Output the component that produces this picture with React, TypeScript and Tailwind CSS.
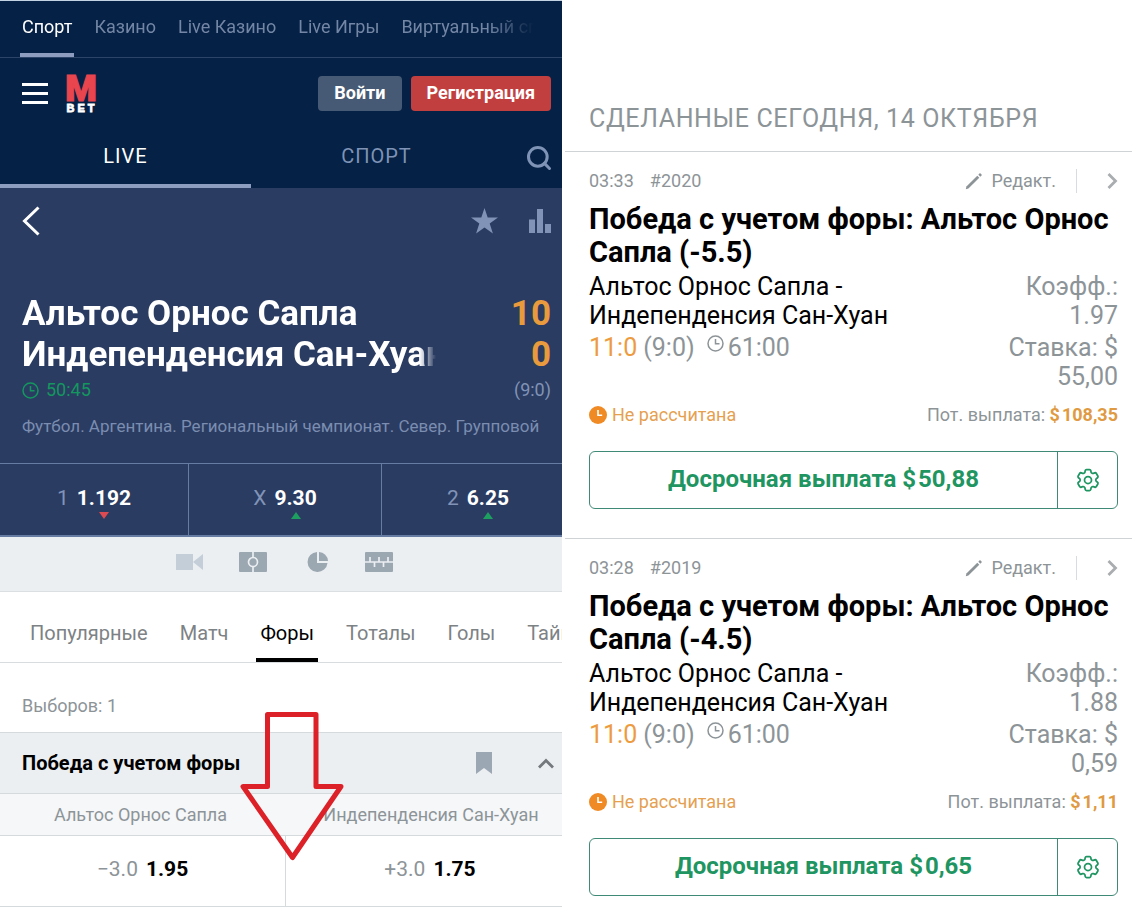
import { Search } from "lucide-react";
import { HiOutlineCog6Tooth } from "react-icons/hi2";
import clsx from "clsx";

const sections = ["Спорт", "Казино", "Live Казино", "Live Игры", "Виртуальный спорт"];

const odds = [
  { label: "1", value: "1.192", up: false },
  { label: "X", value: "9.30", up: true },
  { label: "2", value: "6.25", up: true },
];

const markets = ["Популярные", "Матч", "Форы", "Тоталы", "Голы", "Таймы"];

const bets = [
  {
    time: "03:33",
    id: "#2020",
    handicap: "(-5.5)",
    odd: "1.97",
    stake: "55,00",
    payout: "108,35",
    cashout: "50,88",
  },
  {
    time: "03:28",
    id: "#2019",
    handicap: "(-4.5)",
    odd: "1.88",
    stake: "0,59",
    payout: "1,11",
    cashout: "0,65",
  },
];

const ClockIcon = ({ className }: { className?: string }) => (
  <svg viewBox="0 0 17 17" className={className} fill="none" stroke="currentColor" strokeWidth="1.5">
    <circle cx="8.5" cy="8.5" r="7.5" />
    <path d="M8.5 4v4.8h4" />
  </svg>
);

const SolidClockIcon = () => (
  <svg viewBox="0 0 18 18" className="size-[18px] text-[#f08a24]">
    <circle cx="9" cy="9" r="9" fill="currentColor" />
    <path d="M9 4v5.2h4.2" fill="none" stroke="#fff" strokeWidth="1.6" />
  </svg>
);

const PencilIcon = () => (
  <svg viewBox="0 0 18 18" className="size-[18px]" fill="currentColor">
    <path d="M.8 17.2l.6-2.6L12.300 3.7l2 2L3.4 16.600z" />
    <path d="M13.300 2.7L15 1l2 2-1.700 1.7z" />
  </svg>
);

const TopNav = () => (
  <nav className="h-[57px] border-b border-[#2b4468] pr-7 pl-5">
    <div className="flex h-full gap-[18px] overflow-hidden [mask-image:linear-gradient(to_right,#000_91%,transparent)]">
      {sections.map((name, i) => (
        <a
          key={name}
          href="#"
          className={clsx(
            "shrink-0 border-b-4 px-0.5 pt-[14px] text-lg leading-6 whitespace-nowrap",
            i === 0 ? "border-[#8c9dc0] text-white" : "border-transparent text-[#7486a5]"
          )}
        >
          {name}
        </a>
      ))}
    </div>
  </nav>
);

const Header = () => (
  <header className="border-t border-[#c3d3e4] bg-[#052145]">
    <TopNav />
    <div className="flex items-center pt-[14px] pr-[11px] pl-[22px]">
      <button aria-label="Меню" className="flex flex-col gap-1.5">
        <span className="h-[3px] w-[26px] bg-white" />
        <span className="h-[3px] w-[26px] bg-white" />
        <span className="h-[3px] w-[26px] bg-white" />
      </button>
      <a href="#" className="ml-4">
        <svg viewBox="0 0 34 42" className="h-[42px] w-[34px]">
          <text x="17" y="29" textAnchor="middle" fontFamily="Roboto, sans-serif" fontWeight="900" fontSize="36" stroke="#e8454e" strokeWidth="1.2" fill="#e8454e">
            M
          </text>
          <text x="18" y="40" textAnchor="middle" fontFamily="Liberation Sans, sans-serif" fontWeight="700" fontSize="11" letterSpacing="3" stroke="#fff" strokeWidth=".8" fill="#fff">
            BET
          </text>
        </svg>
      </a>
      <button className="ml-auto h-[35px] rounded bg-[#465a75] px-4 text-lg font-bold text-white">Войти</button>
      <button className="ml-[9px] h-[35px] rounded bg-[#c23f40] px-4 text-lg font-bold text-white">Регистрация</button>
    </div>
    <div className="flex h-[74px] items-stretch text-xl tracking-wider">
      <button className="w-[251px] border-b-4 border-[#8c9dc0] pt-3.5 text-white">LIVE</button>
      <button className="w-[251px] border-b-4 border-transparent pt-3.5 text-[#7e93b5]">СПОРТ</button>
      <button aria-label="Поиск" className="ml-auto pt-3.5 pr-[9px] text-[#7e93b5]">
        <Search className="size-7" strokeWidth={2.6} />
      </button>
    </div>
  </header>
);

const Match = () => (
  <section className="bg-[#2a3c62]">
    <div className="flex items-center pt-[18px] pr-[11px] pl-[22px]">
      <button aria-label="Назад" className="text-white">
        <svg viewBox="0 0 18 30" className="h-[30px] w-[18px]" fill="none" stroke="currentColor" strokeWidth="3">
          <path d="M16.500 1.500L2.500 15l14 13.500" />
        </svg>
      </button>
      <button aria-label="В избранное" className="ml-auto text-[#8193b6]">
        <svg viewBox="0 0 27 26" className="h-[26px] w-[27px]" fill="currentColor">
          <path d="M13.5 0l3.2 9.6H27l-8.3 6 3.2 10-8.4-6.1-8.4 6.1 3.2-10L0 9.6h10.300z" />
        </svg>
      </button>
      <button aria-label="Статистика" className="ml-[31px] text-[#8193b6]">
        <svg viewBox="0 0 22 24" className="h-6 w-[22px]" fill="currentColor">
          <path d="M0 10.500h6V24H0zM8 0h6v24H8zM16 15h6v9h-6z" />
        </svg>
      </button>
    </div>
    <div className="mt-[57px] flex justify-between pr-[11px] pl-[22px] text-[35px] leading-[41px] font-bold">
      <h1 className="w-[414px] overflow-hidden whitespace-nowrap text-white [mask-image:linear-gradient(to_right,#000_96%,transparent)]">
        Альтос Орнос Сапла
        <br />
        Индепенденсия Сан-Хуан
      </h1>
      <div className="text-right text-[#e99a3c]">
        10
        <br />0
      </div>
    </div>
    <div className="mt-[3px] flex items-center justify-between pr-[11px] pl-[22px] text-lg leading-6">
      <span className="flex items-center gap-[7px] text-[#14965f]">
        <ClockIcon className="size-[17px]" />
        50:45
      </span>
      <span className="text-[#8193b6]">(9:0)</span>
    </div>
    <p className="mt-3 overflow-hidden pl-[22px] text-[17px] leading-6 whitespace-nowrap text-[#7b8db0]">
      Футбол. Аргентина. Региональный чемпионат. Север. Групповой
    </p>
    <div className="mt-[25px] grid h-[74px] grid-cols-[189fr_193fr_180fr] divide-x divide-[#667ca3] border-t border-b-2 border-[#667ca3]">
      {odds.map((odd) => (
        <button key={odd.label} className="flex items-center justify-center gap-2 pb-0.5 text-[21px] last:pl-3">
          <span className="text-[#8193b6]">{odd.label}</span>
          <span className="relative font-bold text-white">
            {odd.value}
            <svg
              viewBox="0 0 10 7"
              className={clsx(
                "absolute top-full left-1/2 -mt-0.5 h-[7px] w-[10px] -translate-x-1/2",
                odd.up ? "text-[#1d9f60]" : "rotate-180 text-[#dc4a52]"
              )}
            >
              <path d="M5 0l5 7H0z" fill="currentColor" />
            </svg>
          </span>
        </button>
      ))}
    </div>
  </section>
);

const ViewBar = () => (
  <div className="flex h-[55px] items-center gap-9 border-b border-[#dcdfe2] bg-[#ebeff2] pb-1 pl-[175px] text-[#9ba7b1]">
    <button aria-label="Видео" className="text-[#c3ced9]">
      <svg viewBox="0 0 28 18" className="h-[18px] w-7" fill="currentColor">
        <path d="M1 1h17v16H1zM18 9l10-8v16z" />
      </svg>
    </button>
    <button aria-label="Поле">
      <svg viewBox="0 0 28 20" className="h-5 w-7">
        <rect width="28" height="20" rx="1" fill="currentColor" />
        <g fill="none" stroke="#ebeff2" strokeWidth="1.7">
          <path d="M14 0v5M14 15v5" />
          <circle cx="14" cy="10" r="4.500" />
        </g>
      </svg>
    </button>
    <button aria-label="Статистика матча" className="ml-1">
      <svg viewBox="0 0 22 20" className="h-5 w-[22px]" fill="currentColor">
        <path d="M10 0A10 10 0 1 0 20.500 11H10z" />
        <path d="M12 0a9.500 9.500 0 0 1 9 9h-9z" />
      </svg>
    </button>
    <button aria-label="Хронология">
      <svg viewBox="0 0 28 20" className="h-5 w-7">
        <rect width="28" height="20" rx="1" fill="currentColor" />
        <path d="M0 10h28M5 10V5M14 10V5M23 10V5M9.500 10v5M18.500 10v5" stroke="#ebeff2" strokeWidth="1.7" />
      </svg>
    </button>
  </div>
);

const Markets = () => (
  <section className="relative">
    <nav className="flex h-[71px] gap-6 overflow-hidden border-b border-[#d9dcde] pl-[26px]">
      {markets.map((name) => (
        <a
          key={name}
          href="#"
          className={clsx(
            "shrink-0 border-b-4 px-1 pt-[27px] text-xl leading-7",
            name === "Форы" ? "border-black text-black" : "border-transparent text-[#7d8285]"
          )}
        >
          {name}
        </a>
      ))}
    </nav>
    <p className="pt-[31px] pb-[14px] pl-[22px] text-lg leading-6 text-[#8d9498]">Выборов: 1</p>
    <div className="flex h-[61px] items-center border-t border-[#d5dadd] bg-[#ebeff2] pr-2 pl-[22px]">
      <h2 className="text-xl font-bold text-black">Победа с учетом форы</h2>
      <button aria-label="Закладка" className="ml-auto text-[#9ba7b3]">
        <svg viewBox="0 0 16 22" className="h-[22px] w-4" fill="currentColor">
          <path d="M0 0h16v22l-8-6-8 6z" />
        </svg>
      </button>
      <button aria-label="Свернуть" className="ml-[46px] text-[#74797d]">
        <svg viewBox="0 0 16 11" className="h-[11px] w-4" fill="none" stroke="currentColor" strokeWidth="2.8">
          <path d="M1 9.500l7-7 7 7" />
        </svg>
      </button>
    </div>
    <div className="grid h-[43px] grid-cols-2 items-center border-y border-[#d5dadd] bg-[#f5f7f9] text-center text-lg text-[#8d9498]">
      <span>Альтос Орнос Сапла</span>
      <span className="pl-[19px]">Индепенденсия Сан-Хуан</span>
    </div>
    <div className="grid h-[71px] grid-cols-[286fr_276fr] divide-x divide-[#d5dadd] border-b border-[#d5dadd] text-[21px]">
      <button className="flex items-center justify-center gap-2 pb-0.5">
        <span className="text-[#8d9498]">−3.0</span>
        <span className="font-bold text-black">1.95</span>
      </button>
      <button className="flex items-center justify-center gap-2 pb-0.5 pl-3">
        <span className="text-[#8d9498]">+3.0</span>
        <span className="font-bold text-black">1.75</span>
      </button>
    </div>
    <svg viewBox="0 0 106 150" className="pointer-events-none absolute top-[119px] left-[239px] h-[150px] w-[106px]">
      <path
        d="M28.500 3.500h48.500v72h25L53.500 146.500 4 75.500h24.500z"
        fill="none"
        stroke="#dd2128"
        strokeWidth="5"
        strokeLinejoin="round"
      />
    </svg>
  </section>
);

const BetCard = ({ bet }: { bet: (typeof bets)[number] }) => (
  <article className="border-t border-[#cfd3d5] pt-[17px] pr-[14px] pb-[29px] pl-6 text-[#8d9498]">
    <div className="flex items-center text-lg leading-6">
      <span>{bet.time}</span>
      <span className="ml-4">{bet.id}</span>
      <button className="ml-auto flex items-center gap-2">
        <PencilIcon />
        Редакт.
      </button>
      <span className="ml-5 h-6 w-px bg-[#d9dcde]" />
      <button aria-label="Подробнее" className="ml-[30px] text-[#a9adb0]">
        <svg viewBox="0 0 11 16" className="h-4 w-[11px]" fill="none" stroke="currentColor" strokeWidth="2.8">
          <path d="M1.500 1l7 7-7 7" />
        </svg>
      </button>
    </div>
    <h3 className="mt-2.5 text-[29px] leading-[33px] font-bold text-black">
      Победа с учетом форы: Альтос Орнос Сапла {bet.handicap}
    </h3>
    <div className="mt-[3px] grid grid-cols-[1fr_114px] gap-y-[3px] text-[25px] leading-[29px]">
      <p className="max-w-[320px] text-black">Альтос Орнос Сапла - Индепенденсия Сан-Хуан</p>
      <p className="text-right">Коэфф.: {bet.odd}</p>
      <p className="flex">
        <span className="text-[#ed9b3f]">11:0</span>
        <span className="ml-1.5">(9:0)</span>
        <ClockIcon className="mt-0.5 ml-3 size-[17px]" />
        <span className="ml-1">61:00</span>
      </p>
      <p className="text-right">Ставка: $ {bet.stake}</p>
    </div>
    <div className="mt-3 flex items-center text-lg leading-6">
      <SolidClockIcon />
      <span className="ml-[5px] text-[#e5a050]">Не рассчитана</span>
      <span className="ml-auto">
        Пот. выплата:{" "}
        <strong className="text-[#e09a42]">
          $<span className="ml-0.5">{bet.payout}</span>
        </strong>
      </span>
    </div>
    <div className="mt-6 flex h-[58px] divide-x divide-[#3f8a76] rounded-md border border-[#3f8a76] text-[#1f9562]">
      <button className="flex-1 pb-0.5 text-2xl font-bold">
        Досрочная выплата $<span className="ml-0.5">{bet.cashout}</span>
      </button>
      <button aria-label="Настройки" className="flex w-[59px] items-center justify-center">
        <HiOutlineCog6Tooth className="size-7" />
      </button>
    </div>
  </article>
);

export default function App() {
  return (
    <main className="grid grid-cols-[562fr_567fr] items-start gap-[3px] bg-white font-['Roboto',sans-serif]">
      <div className="min-w-0">
        <Header />
        <Match />
        <ViewBar />
        <Markets />
      </div>
      <div className="min-w-0">
        <h2 className="pt-[101px] pb-[14px] pl-6 text-[25px] leading-9 tracking-wide text-[#8d9498]">
          СДЕЛАННЫЕ СЕГОДНЯ, 14 ОКТЯБРЯ
        </h2>
        {bets.map((bet) => (
          <BetCard key={bet.id} bet={bet} />
        ))}
      </div>
    </main>
  );
}
